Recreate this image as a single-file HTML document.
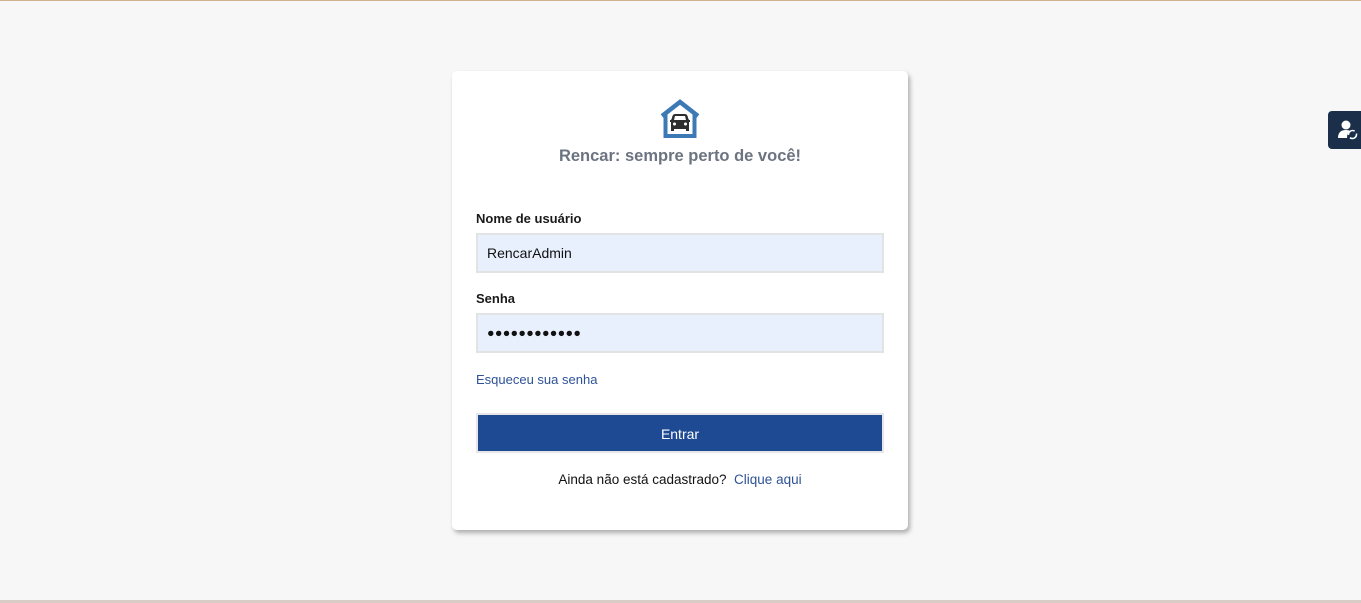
<!DOCTYPE html>
<html><head><meta charset="utf-8"><style>
html,body{margin:0;padding:0}
body{width:1361px;height:603px;background:#f7f7f7;position:relative;overflow:hidden;font-family:"Liberation Sans",sans-serif}
.top{position:absolute;left:0;top:0;width:1361px;height:1px;background:#d2b18e}
.bot{position:absolute;left:0;top:600px;width:1361px;height:3px;background:#d9cbc6}
.card{position:absolute;left:452px;top:71px;width:456px;height:459px;background:#fff;border-radius:5px;box-shadow:2px 3px 5px rgba(0,0,0,.3)}
.title{position:absolute;top:76px;left:0;width:456px;text-align:center;font-size:16.5px;font-weight:bold;color:#6b7480}
.lbl{position:absolute;left:24px;font-size:13px;font-weight:bold;color:#1a1a1a}
.inp{position:absolute;left:24px;height:36px;background:#e8f0fe;border:2px solid #e3e3e3;font-size:14px;color:#111;line-height:37px;padding-left:9px;box-sizing:content-box;width:395px}
.link{color:#2e5297}
.btn{position:absolute;left:24px;top:342px;width:404px;height:36px;background:#1d4a93;border:2px solid #e6e6e6;color:#fff;text-align:center;line-height:38px;font-size:14px}
.side{position:absolute;left:1328px;top:111px;width:40px;height:38px;background:#1b2f4a;border-radius:4px}
</style></head><body>
<div class="top"></div><div class="bot"></div>
<div class="card">
<svg style="position:absolute;left:207px;top:28px" width="42" height="40" viewBox="0 0 42 40">
<path d="M3 17 L21 3 L39 17" fill="none" stroke="#3d7ab5" stroke-width="4.5" stroke-linejoin="miter"/>
<path d="M6.5 15 V37 H35.5 V15" fill="none" stroke="#3d7ab5" stroke-width="4"/>
<path d="M13 19 Q13.5 15 16 15 H26 Q28.5 15 29 19 L30 21 H31 V23 H30 V32 H27 V30 H15 V32 H12 V23 H11 V21 H12 Z" fill="#2d2d2d"/>
<path d="M15 21 L16 17 H26 L27 21 Z" fill="#fff"/>
<circle cx="15.5" cy="25" r="1.5" fill="#fff"/><circle cx="26.5" cy="25" r="1.5" fill="#fff"/>
</svg>
<div class="title">Rencar: sempre perto de você!</div>
<div class="lbl" style="top:140px">Nome de usuário</div>
<div class="inp" style="top:162px">RencarAdmin</div>
<div class="lbl" style="top:220px">Senha</div>
<div class="inp" style="top:242px;font-size:12.5px;letter-spacing:0.3px">●●●●●●●●●●●●</div>
<div class="link" style="position:absolute;left:24px;top:301px;font-size:13px">Esqueceu sua senha</div>
<div class="btn">Entrar</div>
<div style="position:absolute;left:0;width:456px;top:401px;text-align:center;font-size:13.5px;color:#111">Ainda não está cadastrado?&nbsp; <span class="link">Clique aqui</span></div>
</div>
<div class="side">
<svg width="22" height="22" viewBox="0 0 22 22" style="position:absolute;left:9px;top:8px">
<circle cx="9" cy="6" r="4.5" fill="#fff"/>
<path d="M1 19 Q1 11 9 11 Q12 11 13 12 Q10 14 10 19 Z" fill="#fff"/>
<circle cx="15.5" cy="15.5" r="4" fill="none" stroke="#fff" stroke-width="1.6" stroke-dasharray="9 3"/>
</svg>
</div>
</body></html>
